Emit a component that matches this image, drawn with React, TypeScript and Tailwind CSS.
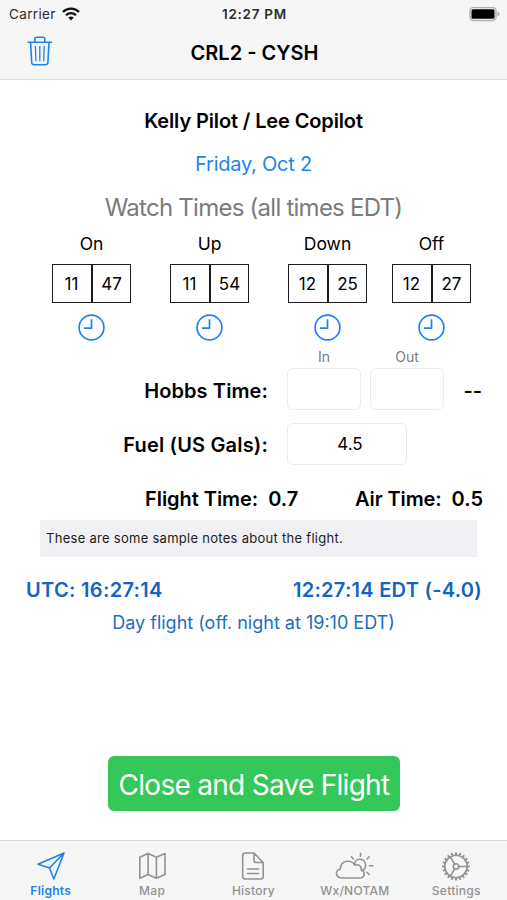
import React from "react";

type Watch = { label: string; hour: string; minute: string };

const watches: Watch[] = [
  { label: "On", hour: "11", minute: "47" },
  { label: "Up", hour: "11", minute: "54" },
  { label: "Down", hour: "12", minute: "25" },
  { label: "Off", hour: "12", minute: "27" },
];

function Clock() {
  return (
    <svg width="27" height="27" viewBox="0 0 27 27" fill="none" stroke="#1c84f0" strokeWidth="1.7">
      <circle cx="13.5" cy="13.5" r="12.4" />
      <path d="M13.5 5.2v9H6" />
    </svg>
  );
}

function WatchTime({ label, hour, minute }: Watch) {
  return (
    <div className="flex w-[79px] flex-col items-center">
      <div className="h-6 text-[17.5px] leading-6">{label}</div>
      <div className="mt-2 flex h-[39px] w-[79px] text-[17px]">
        <div className="flex flex-1 items-center justify-center border-[1.5px] border-r border-[#1c1c1c] pt-[2px] pr-px">{hour}</div>
        <div className="flex flex-1 items-center justify-center border-[1.5px] border-l border-[#1c1c1c] pt-[2px]">{minute}</div>
      </div>
      <div className="mt-[11px]"><Clock /></div>
    </div>
  );
}

function Header() {
  return (
    <header className="h-20 shrink-0 border-b border-[#dedede] bg-[#f6f6f6]">
      <div className="grid h-7 grid-cols-3 items-center pl-[9px] pr-[7px] text-[13.5px] text-[#2d2d2d]">
        <div className="flex items-center gap-[6px]">
          <span className="tracking-[0.35px]">Carrier</span>
          <svg width="18" height="14" viewBox="0 0 18 14" fill="none" stroke="#111" strokeWidth="2.3">
            <path d="M1 5C5.4.6 12.6.6 17 5" />
            <path d="M4 8.2c2.8-2.8 7.2-2.8 10 0" />
            <path d="M9 13.4 6.200 10.600q2.800-2.200 5.600 0Z" fill="#111" stroke="none" />
          </svg>
        </div>
        <div className="text-center font-semibold tracking-[0.7px]">12:27 PM</div>
        <div className="flex justify-end">
          <svg width="31" height="15" viewBox="0 0 31 15">
            <rect x="1" y="0.500" width="26" height="13" rx="3.500" fill="#f6f6f6" stroke="#b0b0b0" strokeWidth="1.500" />
            <rect x="2.500" y="2.300" width="23" height="9.400" rx="1.500" fill="#000" />
            <path d="M28.500 4.700q2 .6 2 2.300t-2 2.300Z" fill="#aaa" />
          </svg>
        </div>
      </div>
      <div className="grid h-[49px] grid-cols-[100px_1fr_100px] items-center">
        <button className="mb-[3px] ml-[27px] w-[26px]" aria-label="Delete">
          <svg width="26" height="30" viewBox="0 0 26 30" fill="none" stroke="#1c84f0" strokeWidth="1.6" strokeLinecap="round" strokeLinejoin="round">
            <path d="M1 6.2h23.5M3.6 6.500l1.100 20q.2 2.300 2.500 2.300h11.200q2.300 0 2.500-2.300l1.100-20M7.800 6V3.200q0-2 2-2h6q2 0 2 2V6" />
            <path d="m8.400 10.500.5 14.300M12.800 10.500v14.300M17.200 10.500l-.5 14.300" strokeWidth="1.300" />
          </svg>
        </button>
        <h1 className="pl-[2px] text-center text-[20px] font-semibold">CRL2 - CYSH</h1>
      </div>
    </header>
  );
}

function Tab({ label, active, children }: { label: string; active?: boolean; children: React.ReactNode }) {
  return (
    <button className={`flex w-[101.4px] flex-col items-center ${active ? "text-[#1c84f0]" : "text-[#929292]"}`}>
      <svg width="40" height="30" viewBox="0 0 40 30" fill="none" stroke="currentColor" strokeWidth="1.6" strokeLinejoin="round" strokeLinecap="round">
        {children}
      </svg>
      <span className={`mt-[2px] text-[12px] leading-4 tracking-[0.25px] ${active ? "font-semibold" : "font-medium"}`}>{label}</span>
    </button>
  );
}

function Gear() {
  const teeth = Array.from({ length: 20 }, (_, i) => i * 18);
  return (
    <>
      <circle cx="20" cy="15.5" r="11.2" />
      <circle cx="20" cy="15.5" r="2.7" />
      <path d="M22.7 15.5h8.5M18.6 13.2 14.4 5.8M18.6 17.8l-4.2 7.4" />
      {teeth.map((angle) => (
        <path key={angle} d="M20 3.9V1.6" strokeWidth="2" strokeLinecap="butt" transform={`rotate(${angle} 20 15.5)`} />
      ))}
    </>
  );
}

export default function App() {
  return (
    <div className="flex h-[900px] w-[507px] flex-col overflow-hidden bg-white font-['Inter','Liberation_Sans',sans-serif] text-black">
      <Header />
      <main className="flex min-h-0 flex-1 flex-col">
        <div className="mt-[27px] text-center text-[20px] font-semibold leading-7 tracking-[-0.13px]">Kelly Pilot / Lee Copilot</div>
        <div className="mt-[15px] text-center text-[20px] leading-7 tracking-[-0.24px] text-[#1c84f0]">Friday, Oct 2</div>
        <div className="mt-[14px] text-center text-[24px] leading-8 tracking-[-0.75px] text-[#7b7b7b]">Watch Times (all times EDT)</div>
        <div className="mt-2 flex pl-[52px]">
          <WatchTime {...watches[0]} />
          <div className="w-[39px]" />
          <WatchTime {...watches[1]} />
          <div className="w-[39px]" />
          <WatchTime {...watches[2]} />
          <div className="w-[25px]" />
          <WatchTime {...watches[3]} />
        </div>
        <div className="mt-[6px] mb-px flex h-5 gap-[9px] pl-[287px] text-center text-[14px] leading-5 text-[#7b7b7b]">
          <span className="w-[74px]">In</span>
          <span className="w-[74px]">Out</span>
        </div>
        <div className="flex h-[42px] items-center text-[20px] font-semibold">
          <span className="w-[268px] pt-[3px] text-right tracking-[0.1px]">Hobbs Time:</span>
          <div className="ml-[19px] h-[42px] w-[74px] rounded-md border border-[#ececec]" />
          <div className="ml-[9px] h-[42px] w-[74px] rounded-md border border-[#ececec]" />
          <span className="ml-auto mr-[25px] pt-[3px]">--</span>
        </div>
        <div className="mt-[13px] flex h-[42px] items-center text-[20px] font-semibold">
          <span className="w-[268px] pt-px text-right tracking-[0.17px]">Fuel (US Gals):</span>
          <div className="ml-[19px] flex h-[42px] w-[120px] items-center justify-center rounded-md border border-[#ececec] pt-[2px] pl-[6px] text-[17px] font-normal">4.5</div>
        </div>
        <div className="mt-5 flex h-7 items-center justify-between pl-[145px] pr-[24px] text-[20px] font-semibold">
          <div className="flex gap-[10px]"><span className="tracking-[-0.05px]">Flight Time:</span><span>0.7</span></div>
          <div className="flex gap-[10px]"><span className="tracking-[-0.1px]">Air Time:</span><span>0.5</span></div>
        </div>
        <div className="ml-10 mt-[7px] flex h-[37px] w-[437px] items-center bg-[#f1f0f5] pl-[6px] pt-px text-[13px] tracking-[0.28px] text-[#1c1c1c]">
          These are some sample notes about the flight.
        </div>
        <div className="mt-[19px] flex h-7 items-center justify-between pl-[26px] pr-[25px] text-[20px] font-semibold text-[#1565c0]">
          <span className="tracking-[0.32px]">UTC: 16:27:14</span>
          <span className="tracking-[0.27px]">12:27:14 EDT (-4.0)</span>
        </div>
        <div className="mt-[7px] text-center text-[18px] leading-6 text-[#1c6dc6]">Day flight (off. night at 19:10 EDT)</div>
        <button className="ml-[108px] mt-[121px] flex h-[55px] w-[292px] shrink-0 items-center justify-center rounded-md bg-[#34c759] pt-[2px] text-[28px] text-white">
          <span className="whitespace-nowrap tracking-[-0.72px]">Close and Save Flight</span>
        </button>
      </main>
      <nav className="flex h-[60px] shrink-0 border-t border-[#d9d9d9] bg-[#f6f6f6] pt-[10px]">
        <Tab label="Flights" active>
          <path d="M33 2 7 13.2l11.500 3.800L22.8 28ZM33 2 18.500 17" />
        </Tab>
        <Tab label="Map">
          <path d="m7.800 6.200 8.300-3.700 8.300 3.700L33 2.500v21l-8.600 3.800-8.300-3.800-8.300 3.800ZM16.100 2.500v21M24.400 6.200v21" />
        </Tab>
        <Tab label="History">
          <path d="M12.200 2H21l9.200 9.500v14q0 2.500-2.500 2.500H12.200q-2.500 0-2.500-2.500v-21Q9.700 2 12.200 2ZM21 2v7.200q0 2.300 2.300 2.300h6.900M14.500 18h11M14.500 22.500h11" />
        </Tab>
        <Tab label="Wx/NOTAM">
          <path d="M7.500 27C-.2 27-.2 18.800 5.200 18.300 5.700 8.700 17.200 8 19.800 14.200c4-1.500 7 1.300 6.500 4.600 4.500 1.700 3.600 8.200-1.800 8.200Z" />
          <path d="M19.500 13.500c.5-7.300 11.100-6.900 11.100.8 0 2.700-1.600 4.700-4.100 5.300M25.500 5.200V2.300M32 8l2.200-2.200M34.500 14.700h3.300M32 21.300l2.200 2.200M18.500 8l-2.200-2.200" />
        </Tab>
        <Tab label="Settings"><Gear /></Tab>
      </nav>
    </div>
  );
}
